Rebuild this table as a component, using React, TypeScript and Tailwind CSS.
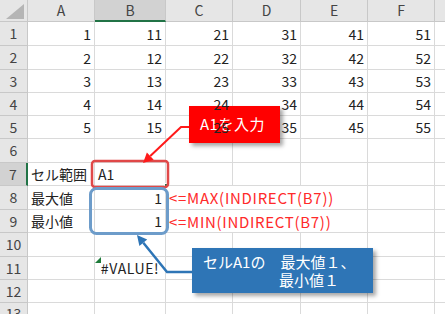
import React from 'react';

const font = { fontFamily: '"Noto Sans CJK JP", "Noto Sans", sans-serif' };

type CellSpec = { text?: string; align?: 'left' | 'right' | 'center'; red?: boolean; noRight?: boolean; error?: boolean };

const letters = ['A', 'B', 'C', 'D', 'E', 'F'];

const buildRows = (): CellSpec[][] => {
  const rows: CellSpec[][] = [];
  for (let i = 1; i <= 5; i++) {
    rows.push([0, 10, 20, 30, 40, 50].map(n => ({ text: String(n + i), align: 'right' as const })));
  }
  rows.push([{}, {}, {}, {}, {}, {}]);
  rows.push([{ text: 'セル範囲' }, { text: 'A1' }, {}, {}, {}, {}]);
  rows.push([
    { text: '最大値' },
    { text: '1', align: 'right' },
    { text: '<=MAX(INDIRECT(B7))', red: true, noRight: true },
    { noRight: true },
    {},
    {},
  ]);
  rows.push([
    { text: '最小値' },
    { text: '1', align: 'right' },
    { text: '<=MIN(INDIRECT(B7))', red: true, noRight: true },
    { noRight: true },
    {},
    {},
  ]);
  rows.push([{}, {}, {}, {}, {}, {}]);
  rows.push([{}, { text: '#VALUE!', align: 'center', error: true }, {}, {}, {}, {}]);
  rows.push([{}, {}, {}, {}, {}, {}]);
  rows.push([{}, {}, {}, {}, {}, {}]);
  return rows;
};

const Cell: React.FC<{ spec: CellSpec }> = ({ spec }) => {
  const justify =
    spec.align === 'right' ? 'justify-end pr-[3px]' : spec.align === 'center' ? 'justify-center' : 'justify-start pl-[3px]';
  const textCls = spec.red
    ? 'text-[15px] tracking-[0.7px] text-[#ff2a2a]'
    : spec.error
      ? 'text-[14px] tracking-[0.6px] text-[#222]'
      : 'text-[14px] text-[#222]';
  return (
    <div
      className={`relative flex items-center border-b border-[#dadada] bg-white ${spec.noRight ? '' : 'border-r'} ${justify}`}
    >
      {spec.error && (
        <div className="absolute left-0 top-0 h-0 w-0 border-l-[6px] border-t-[6px] border-l-transparent border-t-[#1e7b3a] rotate-90" />
      )}
      {spec.text && <span className={`relative z-10 whitespace-nowrap leading-none ${textCls}`}>{spec.text}</span>}
    </div>
  );
};

export default function App() {
  const rows = buildRows();
  return (
    <div className="relative h-[314px] w-[445px] overflow-hidden bg-white" style={font}>
      <div className="grid h-full grid-cols-[28px_67px_71px_67px_68px_67px_67px_1fr] grid-rows-[22px_24px_24px_23px_23px_23px_24px_23px_24px_23px_24px_23px_23px_1fr]">
        {/* header row */}
        <div className="relative border-b border-r border-[#c8c8c8] bg-[#e6e6e6]">
          <div className="absolute bottom-[2px] right-[3px] h-0 w-0 border-b-[15px] border-l-[18px] border-b-[#b5b5b5] border-l-transparent" />
        </div>
        {letters.map(l => (
          <div
            key={l}
            className={`flex items-center justify-center border-r text-[14px] text-[#444] ${
              l === 'B' ? 'border-b-2 border-b-[#217346] border-r-[#c8c8c8] bg-[#d2d2d2]' : 'border-b border-[#c8c8c8] bg-[#e6e6e6]'
            }`}
          >
            {l}
          </div>
        ))}
        <div className="border-b border-[#c8c8c8] bg-[#e6e6e6]" />

        {rows.map((row, ri) => (
          <React.Fragment key={ri}>
            <div
              className={`flex items-center justify-center border-b border-[#c8c8c8] text-[14px] text-[#444] ${
                ri === 6 ? 'border-r-2 border-r-[#217346] bg-[#d2d2d2]' : 'border-r bg-[#e6e6e6]'
              }`}
            >
              {ri + 1}
            </div>
            {row.map((c, ci) => (
              <Cell key={ci} spec={c} />
            ))}
            <div className="border-b border-[#dadada] bg-white" />
          </React.Fragment>
        ))}
      </div>

      {/* fill handle of the active cell */}
      <div className="absolute left-[164px] top-[183px] h-[5px] w-[5px] border border-white bg-[#217346]" />

      {/* annotations */}
      <svg className="pointer-events-none absolute inset-0" width={445} height={314} viewBox="0 0 445 314">
        <rect x={92} y={161} width={76} height={26} rx={3} fill="none" stroke="#e04848" strokeWidth={2.5} />
        <rect x={90.5} y={188.5} width={77} height={45} rx={6} fill="none" stroke="#6d9cca" strokeWidth={3} />
        <polyline points="190,127 181,127 150.3,156.1" fill="none" stroke="#ff1a1a" strokeWidth={2} />
        <polygon points="143,163 153.7,159.7 146.9,152.5" fill="#ff1a1a" />
        <polyline points="192,272 167,272 143.3,242.8" fill="none" stroke="#2e75b6" strokeWidth={2.5} />
        <polygon points="137,235 147.2,239.6 139.4,245.9" fill="#2e75b6" />
      </svg>

      <div className="absolute left-[189px] top-[106px] flex h-[37px] w-[91px] items-center bg-[#ff0000] pl-[11px] text-[15px] tracking-[0.5px] text-white shadow-[3px_3px_4px_rgba(0,0,0,0.35)]">
        A1を入力
      </div>

      <div className="absolute left-[192px] top-[248px] h-[45px] w-[181px] bg-[#2e75b6] pl-[11px] pt-[5px] text-[15px] leading-[18px] text-white shadow-[3px_3px_4px_rgba(0,0,0,0.35)]">
        <div className="whitespace-nowrap">セルA1の　最大値１、</div>
        <div className="ml-[76px] whitespace-nowrap">最小値１</div>
      </div>
    </div>
  );
}
